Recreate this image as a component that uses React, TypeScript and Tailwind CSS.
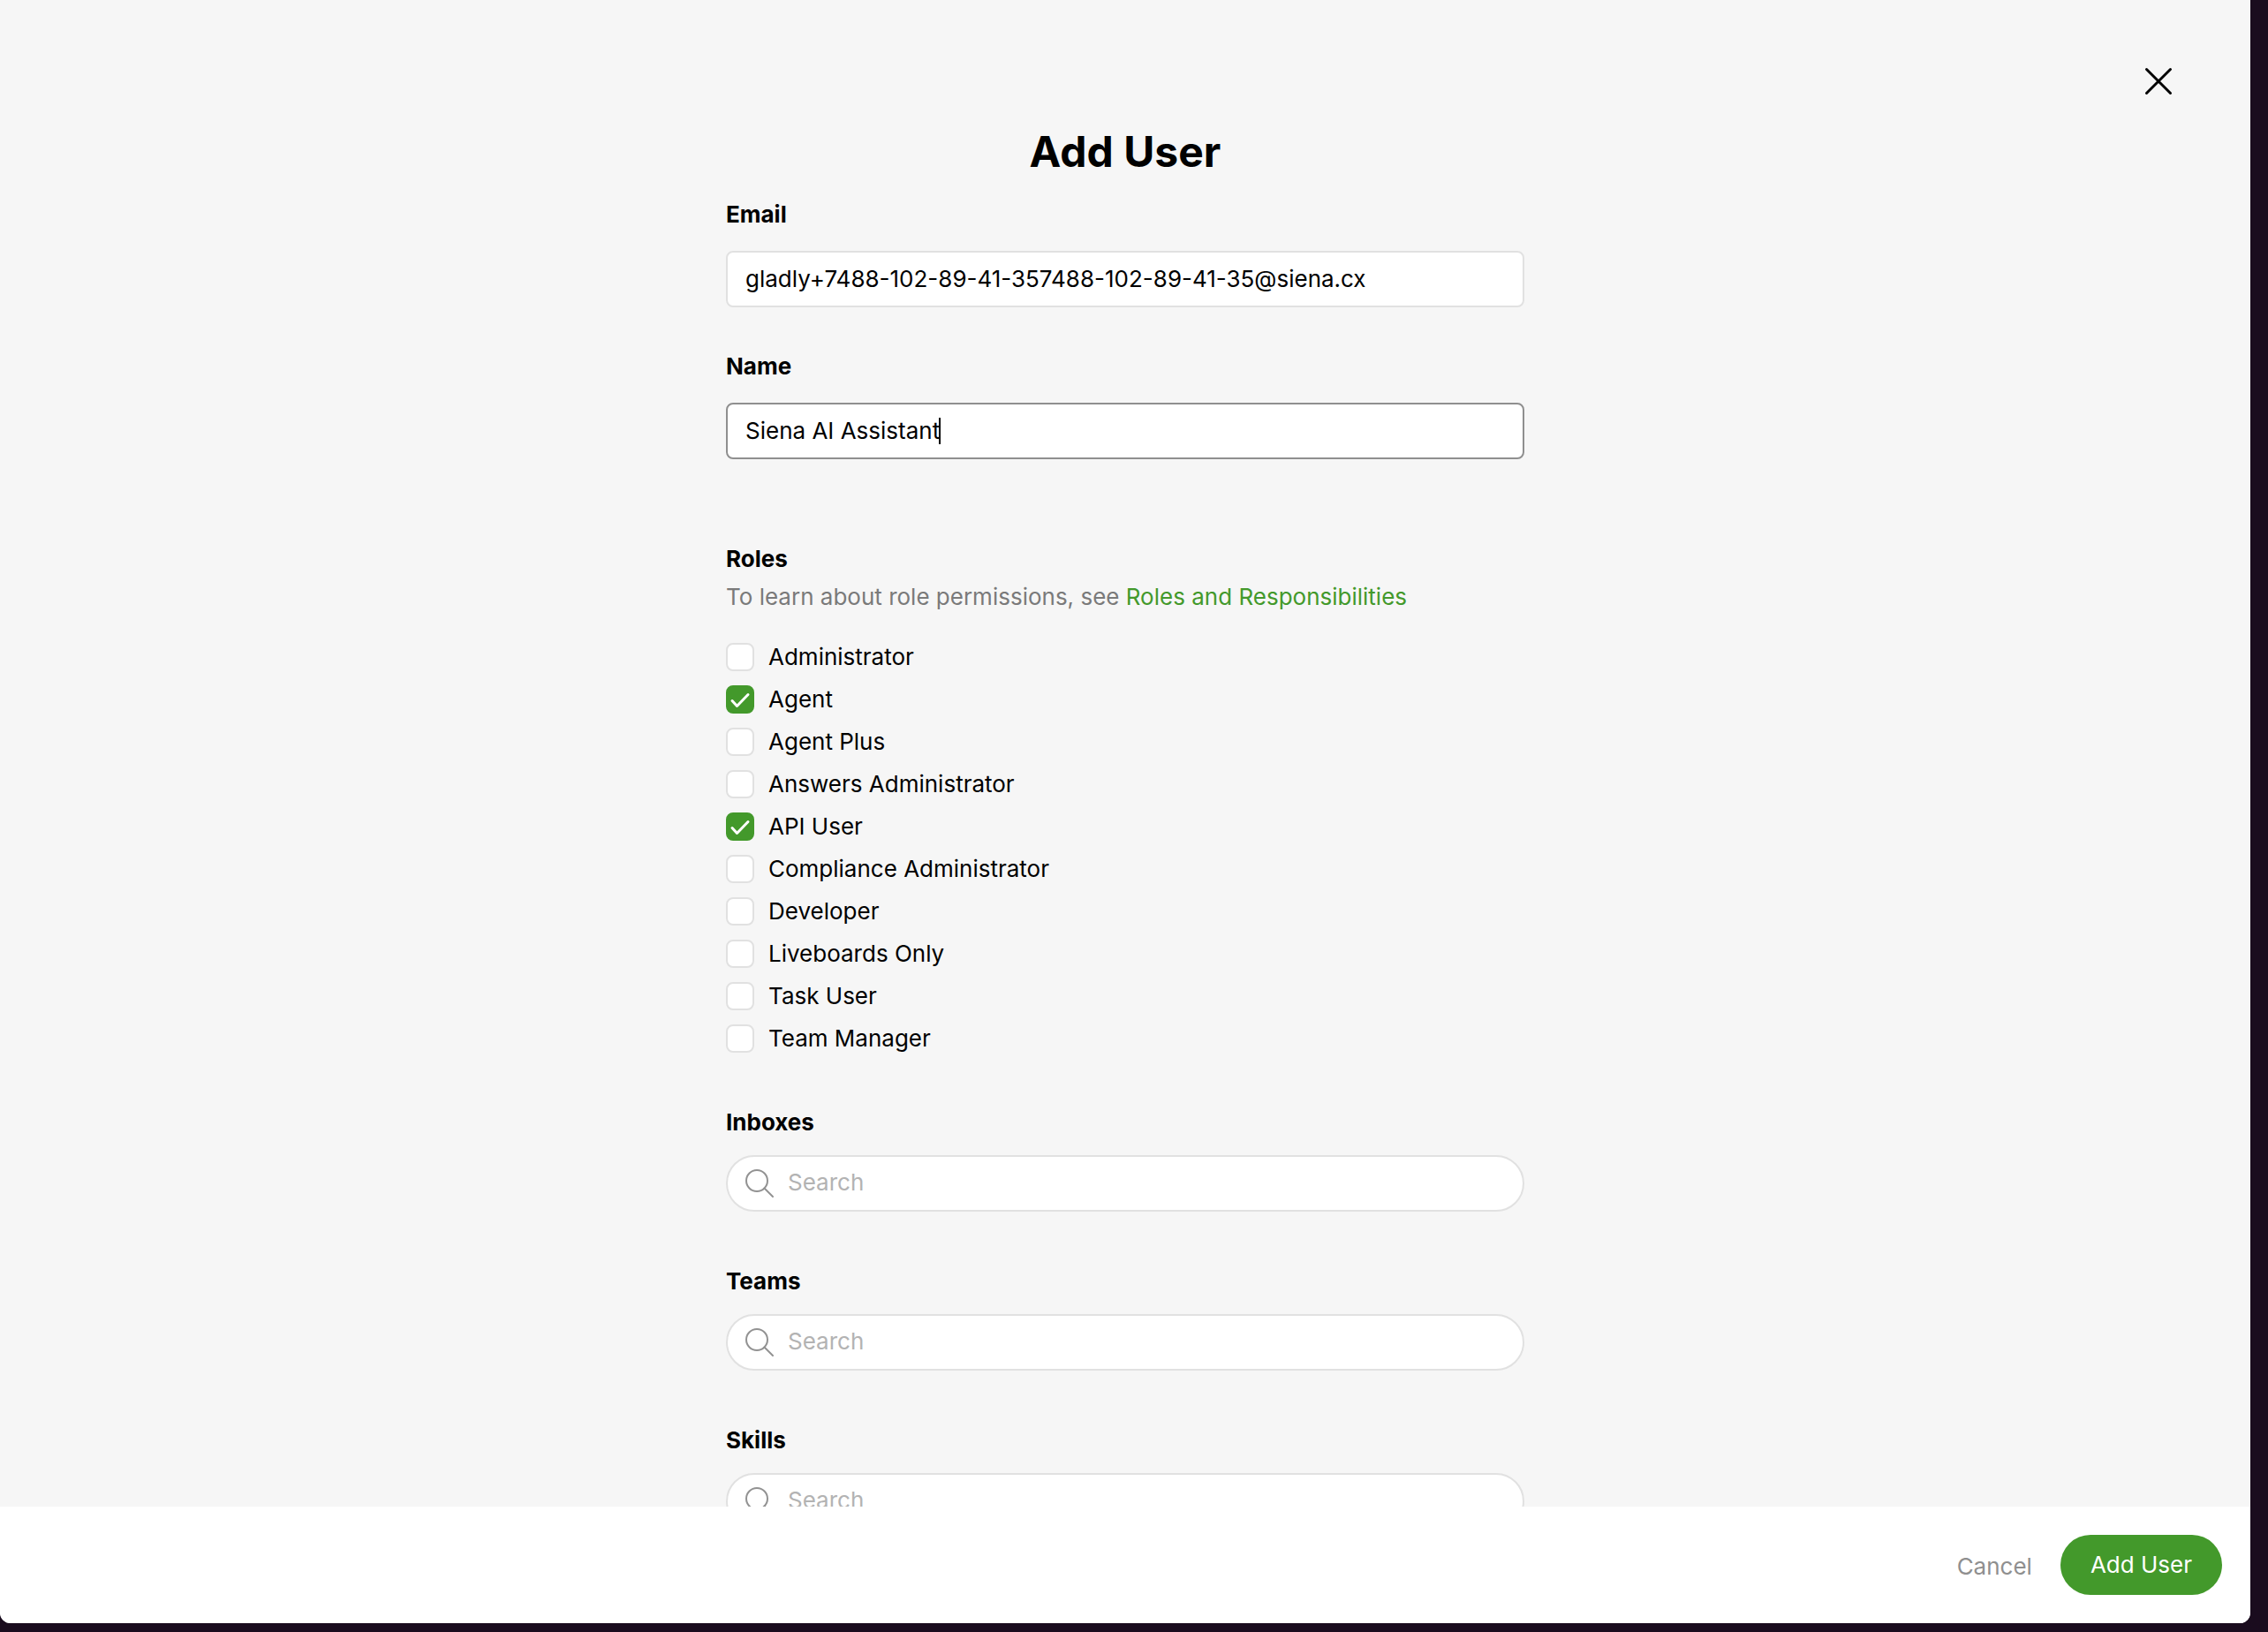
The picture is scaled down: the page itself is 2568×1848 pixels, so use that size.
import React, { useState } from 'react';
import clsx from 'clsx';

const ROLES = [
  'Administrator',
  'Agent',
  'Agent Plus',
  'Answers Administrator',
  'API User',
  'Compliance Administrator',
  'Developer',
  'Liveboards Only',
  'Task User',
  'Team Manager',
];

export default function App() {
  const [email, setEmail] = useState('gladly+7488-102-89-41-357488-102-89-41-35@siena.cx');
  const [name, setName] = useState('Siena AI Assistant');
  const [roles, setRoles] = useState<string[]>(['Agent', 'API User']);

  const toggleRole = (role: string) =>
    setRoles((prev) => (prev.includes(role) ? prev.filter((r) => r !== role) : [...prev, role]));

  return (
    <div className="h-screen bg-[#1a0c1e] pr-5 pb-[10px] font-['Inter',sans-serif] text-[26px] leading-10 text-black">
      <div role="dialog" aria-labelledby="title" className="relative flex h-full flex-col overflow-hidden rounded-b-xl bg-[#f6f6f6]">
        <button type="button" aria-label="Close" className="absolute top-[76px] right-[88px]">
          <svg className="size-8" viewBox="0 0 32 32" fill="none" stroke="currentColor" strokeWidth="3" strokeLinecap="round">
            <path d="M2.5 2.5 29.5 29.5M29.5 2.5 2.5 29.5" />
          </svg>
        </button>

        <main className="min-h-0 flex-1 overflow-hidden pt-[142px]">
          <form id="add-user" className="mx-auto w-full max-w-[904px]">
            <h1 id="title" className="mb-[21px] text-center text-[48px] leading-[60px] font-bold">Add User</h1>

            <TextField id="email" label="Email" value={email} onChange={setEmail} />
            <TextField id="name" label="Name" value={name} onChange={setName} active />

            <fieldset className="mt-[93px]">
              <legend className="mb-[3px] font-bold">Roles</legend>
              <p className="text-[#7a7a7a]">
                To learn about role permissions, see <a href="#roles" className="text-[#43992b]">Roles and Responsibilities</a>
              </p>
              <div className="mt-7 flex flex-col gap-2">
                {ROLES.map((role) => (
                  <RoleOption key={role} role={role} checked={roles.includes(role)} onToggle={() => toggleRole(role)} />
                ))}
              </div>
            </fieldset>

            <div className="mt-[55px] flex flex-col gap-[59px]">
              <SearchField id="inboxes" label="Inboxes" />
              <SearchField id="teams" label="Teams" />
              <SearchField id="skills" label="Skills" />
            </div>
          </form>
        </main>

        <footer className="flex items-center justify-end gap-8 bg-white p-8">
          <button type="button" className="pt-1 text-[#8f8f8f]">Cancel</button>
          <button type="button" className="h-[68px] rounded-full bg-[#43992b] px-[34px] text-white">Add User</button>
        </footer>
      </div>
    </div>
  );
}

function TextField({ id, label, value, onChange, active }: {
  id: string; label: string; value: string; onChange: (value: string) => void; active?: boolean;
}) {
  return (
    <div className="mb-[47px]">
      <label htmlFor={id} className="mb-[21px] block font-bold">{label}</label>
      <div className="relative">
        <input
          id={id}
          type="text"
          value={value}
          onChange={(e) => onChange(e.target.value)}
          className={clsx(
            'block h-16 w-full rounded-lg border-2 bg-white px-5 pb-[2px] outline-none',
            active ? 'border-[#8f8f8f] caret-transparent' : 'border-[#e1e1e1]'
          )}
        />
        {/* text cursor */}
        {active && <span className="absolute top-[17px] left-[241px] h-[30px] w-[2px] bg-black" />}
      </div>
    </div>
  );
}

function RoleOption({ role, checked, onToggle }: { role: string; checked: boolean; onToggle: () => void }) {
  return (
    <label className="flex items-center gap-4">
      <span className="relative size-8">
        <input
          type="checkbox"
          checked={checked}
          onChange={onToggle}
          className="block size-8 appearance-none rounded-lg border-2 border-[#e1e1e1] bg-white checked:border-[#43992b] checked:bg-[#43992b]"
        />
        {checked && (
          <svg className="pointer-events-none absolute inset-0 size-8" viewBox="0 0 32 32" fill="none" stroke="white" strokeWidth="3" strokeLinecap="round" strokeLinejoin="round">
            <path d="M7 17.5 12.5 23.5 25 10.5" />
          </svg>
        )}
      </span>
      {role}
    </label>
  );
}

function SearchField({ id, label }: { id: string; label: string }) {
  return (
    <div>
      <label htmlFor={id} className="mb-[17px] block font-bold">{label}</label>
      <div className="flex h-16 items-center gap-4 rounded-full border-2 border-[#e1e1e1] bg-white px-5">
        <svg className="size-8 shrink-0" viewBox="0 0 32 32" fill="none" stroke="#929292" strokeWidth="2" strokeLinecap="round">
          <circle cx="13" cy="13" r="12" />
          <path d="M21.5 21.5 31 31" />
        </svg>
        <input id={id} type="search" placeholder="Search" className="min-w-0 flex-1 pb-[2px] outline-none placeholder:text-[#b3b3b3]" />
      </div>
    </div>
  );
}
